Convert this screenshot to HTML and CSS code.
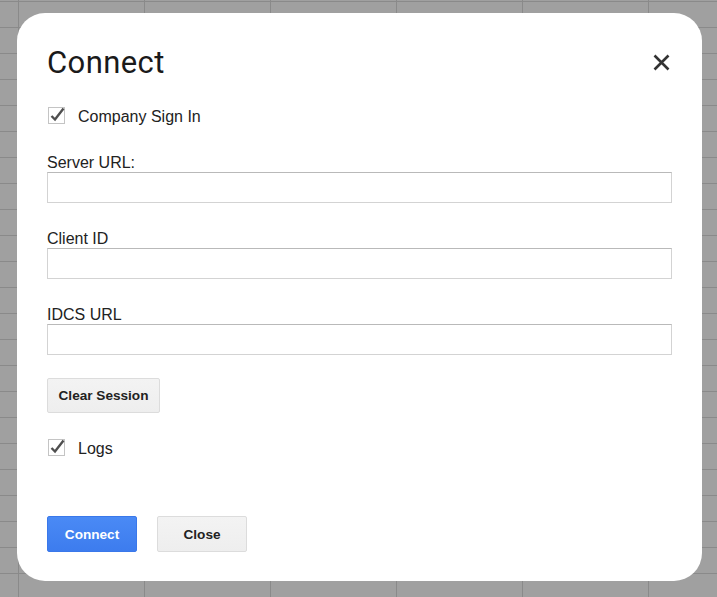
FILE: index.html
```html
<!DOCTYPE html>
<html>
<head>
<meta charset="utf-8">
<link rel="stylesheet" href="styles.css">
</head>
<body>
<div class="dialog">
  <div class="header">
    <h1 class="title">Connect</h1>
    <svg class="close-x" width="17" height="17" viewBox="0 0 17 17"><path d="M1.5 1.5 L15.5 15.5 M15.5 1.5 L1.5 15.5" stroke="#333" stroke-width="2.6" fill="none"/></svg>
  </div>
  <label class="check-row row-company">
    <svg class="check" width="18" height="19" viewBox="0 0 18 19"><rect x="0.5" y="2.5" width="16" height="16" fill="#fff" stroke="#c4c4c4"/><path d="M3.5 11 L7 14.5 L15.5 3.5" stroke="#4f4f4f" stroke-width="2.4" fill="none"/></svg>
    <span>Company Sign In</span>
  </label>
  <div class="field">
    <div class="label">Server URL:</div>
    <div class="input"></div>
  </div>
  <div class="field">
    <div class="label">Client ID</div>
    <div class="input"></div>
  </div>
  <div class="field">
    <div class="label">IDCS URL</div>
    <div class="input"></div>
  </div>
  <div class="btn btn-clear">Clear Session</div>
  <label class="check-row row-logs">
    <svg class="check" width="18" height="19" viewBox="0 0 18 19"><rect x="0.5" y="2.5" width="16" height="16" fill="#fff" stroke="#c4c4c4"/><path d="M3.5 11 L7 14.5 L15.5 3.5" stroke="#4f4f4f" stroke-width="2.4" fill="none"/></svg>
    <span>Logs</span>
  </label>
  <div class="footer">
    <div class="btn btn-action">Connect</div>
    <div class="btn">Close</div>
  </div>
</div>
</body>
</html>
```
FILE: styles.css
```css
html, body {
  margin: 0;
  height: 100%;
}
body {
  box-sizing: border-box;
  padding: 13px 0 0 17px;
  background-color: #a0a0a0;
  background-image:
    linear-gradient(to right, #8a8a8a 1px, transparent 1px),
    linear-gradient(to bottom, #8a8a8a 1px, transparent 1px);
  background-size: 126px 100%, 100% 26px;
  background-position: 18px 0, 0 1px;
  font-family: "Liberation Sans", Arial, sans-serif;
  color: #222;
  overflow: hidden;
}
.dialog {
  box-sizing: border-box;
  width: 685px;
  height: 568px;
  background: #fff;
  border-radius: 28px;
  padding: 32px 30px 0 30px;
  display: flex;
  flex-direction: column;
}
.header {
  display: flex;
  justify-content: space-between;
  align-items: center;
  height: 36px;
}
.title {
  margin: 0;
  font-family: Roboto, "Open Sans", sans-serif;
  font-weight: 400;
  font-size: 31px;
  line-height: 36px;
  color: #1a1a1a;
  letter-spacing: 0.4px;
}
.close-x {
  margin-right: 2px;
  margin-top: -1px;
}
.check-row {
  display: flex;
  align-items: flex-start;
  height: 18px;
  font-size: 16px;
  line-height: 18px;
}
.check {
  margin-top: -3px;
  margin-left: 1px;
  margin-right: 12px;
  flex: none;
}
.row-company {
  margin-top: 27px;
}
.field {
  display: flex;
  flex-direction: column;
  margin-top: 28px;
}
.field + .field {
  margin-top: 27px;
}
.label {
  font-size: 16px;
  line-height: 18px;
}
.input {
  box-sizing: border-box;
  height: 31px;
  width: 100%;
  border: 1px solid #d3d3d3;
  border-top-color: #b9b9b9;
  background: #fff;
}
.btn {
  box-sizing: border-box;
  display: flex;
  align-items: center;
  justify-content: center;
  height: 36px;
  width: 90px;
  border: 1px solid #dcdcdc;
  border-radius: 2px;
  background: linear-gradient(#f3f3f3, #eeeeee);
  color: #222;
  font-weight: bold;
  font-size: 13.6px;
}
.btn-clear {
  width: 113px;
  height: 35px;
  margin-top: 23px;
}
.row-logs {
  margin-top: 27px;
}
.footer {
  display: flex;
  gap: 20px;
  margin-top: 58px;
}
.btn-action {
  background: linear-gradient(#4a8af5, #3d7cee);
  border-color: #3a78ea;
  color: #fff;
}
```
